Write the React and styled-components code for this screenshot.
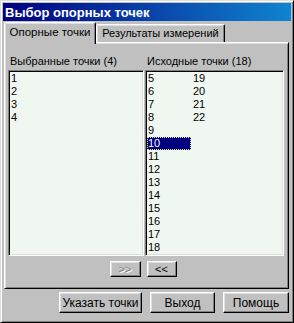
import React from 'react';
import styled, { createGlobalStyle } from 'styled-components';

const GlobalStyle = createGlobalStyle`
  html, body {
    margin: 0;
    padding: 0;
    background: #c0c0c0;
  }
  body {
    font-family: 'Liberation Sans', Arial, sans-serif;
    font-size: 11px;
  }
`;

const Window = styled.div`
  box-sizing: border-box;
  width: 294px;
  height: 323px;
  background: #c0c0c0;
  border: 1px solid;
  border-color: #dfdfdf #000 #000 #dfdfdf;
  box-shadow: inset 1px 1px #fff, inset -1px -1px #808080;
  padding: 2px;
  display: flex;
  flex-direction: column;
`;

const TitleBar = styled.div`
  height: 18px;
  flex: none;
  display: flex;
  align-items: center;
  padding-left: 2px;
  background: linear-gradient(to right, #000080, #1084d0);
  color: #fff;
  font-weight: bold;
  font-size: 13px;
  white-space: nowrap;
`;

const TabStrip = styled.div`
  display: flex;
  align-items: flex-end;
  height: 20px;
  margin-top: 1px;
  padding-left: 1px;
  flex: none;
`;

const Tab = styled.div`
  box-sizing: border-box;
  position: relative;
  display: flex;
  align-items: center;
  justify-content: center;
  width: ${p => p.$w}px;
  height: ${p => (p.$active ? 22 : 18)}px;
  margin-bottom: ${p => (p.$active ? -2 : 0)}px;
  z-index: ${p => (p.$active ? 1 : 0)};
  padding-bottom: ${p => (p.$active ? 3 : 1)}px;
  background: #c0c0c0;
  border: 1px solid;
  border-bottom: none;
  border-color: #fff #000 transparent #fff;
  border-top-left-radius: 2px;
  border-top-right-radius: 2px;
  box-shadow: inset -1px 0 #808080, inset 1px 1px #dfdfdf;
  color: #000;
  font-size: ${p => (p.$active ? 11.5 : 11)}px;
  white-space: nowrap;
`;

const Panel = styled.div`
  box-sizing: border-box;
  height: 247px;
  margin: 0 2px 0 1px;
  flex: none;
  border: 1px solid;
  border-color: #fff #000 #000 #fff;
  box-shadow: inset 1px 1px #dfdfdf, inset -1px -1px #808080;
  padding: 11px 4px 11px 3px;
  display: flex;
  flex-direction: column;
`;

const Columns = styled.div`
  display: grid;
  grid-template-columns: 136px 139px;
  column-gap: 1px;
`;

const Group = styled.div`
  display: flex;
  flex-direction: column;
`;

const Label = styled.div`
  height: 14px;
  line-height: 14px;
  padding-left: 2px;
  margin-bottom: 2px;
  white-space: nowrap;
`;

const ListBox = styled.div`
  box-sizing: border-box;
  height: 186px;
  background: #f0f7f0;
  border: 1px solid;
  border-color: #808080 #fff #fff #808080;
  box-shadow: inset 1px 1px #000, inset -1px -1px #dfdfdf;
  padding: 1px;
  overflow: hidden;
  display: grid;
  grid-auto-flow: column;
  grid-template-rows: repeat(14, 13px);
  grid-auto-columns: ${p => p.$colWidth}px;
  align-content: start;
`;

const Item = styled.div`
  line-height: 13px;
  height: 13px;
  padding-left: 1px;
  color: ${p => (p.$selected ? '#fff' : '#000')};
  background: ${p => (p.$selected ? '#000080' : 'transparent')};
  outline: ${p => (p.$selected ? '1px dotted #e8e890' : 'none')};
  outline-offset: -1px;
  margin-right: ${p => (p.$selected ? 1 : 0)}px;
`;

const MoveRow = styled.div`
  display: flex;
  justify-content: center;
  gap: 6px;
  margin-top: 5px;
  padding-right: 6px;
`;

const Button = styled.button`
  box-sizing: border-box;
  width: ${p => p.$w}px;
  height: ${p => p.$h}px;
  padding: 0;
  margin: 0;
  background: #c0c0c0;
  border: 1px solid;
  border-color: #fff #000 #000 #fff;
  box-shadow: inset -1px -1px #808080, inset 1px 1px #dfdfdf;
  font-family: 'Liberation Sans', Arial, sans-serif;
  font-size: ${p => p.$fs || 11}px;
  color: ${p => (p.disabled ? '#808080' : '#000')};
  text-shadow: ${p => (p.disabled ? '1px 1px #fff' : 'none')};
  display: flex;
  align-items: center;
  justify-content: center;
  white-space: nowrap;
`;

const Footer = styled.div`
  display: flex;
  justify-content: flex-end;
  gap: 8px;
  margin-top: 3px;
  padding-right: 2px;
`;

const selected = ['1', '2', '3', '4'];
const source = Array.from({ length: 18 }, (_, i) => String(i + 5));

export default function App() {
  return (
    <>
      <GlobalStyle />
      <Window>
        <TitleBar>Выбор опорных точек</TitleBar>
        <TabStrip>
          <Tab $active $w={92}>Опорные точки</Tab>
          <Tab $w={129}>Результаты измерений</Tab>
        </TabStrip>
        <Panel>
          <Columns>
            <Group>
              <Label>Выбранные точки (4)</Label>
              <ListBox $colWidth={132}>
                {selected.map(n => (
                  <Item key={n}>{n}</Item>
                ))}
              </ListBox>
            </Group>
            <Group>
              <Label>Исходные точки (18)</Label>
              <ListBox $colWidth={45}>
                {source.map(n => (
                  <Item key={n} $selected={n === '10'}>{n}</Item>
                ))}
              </ListBox>
            </Group>
          </Columns>
          <MoveRow>
            <Button $w={31} $h={16} disabled>&gt;&gt;</Button>
            <Button $w={30} $h={16}>&lt;&lt;</Button>
          </MoveRow>
        </Panel>
        <Footer>
          <Button $w={83} $h={21} $fs={12}>Указать точки</Button>
          <Button $w={65} $h={21} $fs={12}>Выход</Button>
          <Button $w={66} $h={21} $fs={12}>Помощь</Button>
        </Footer>
      </Window>
    </>
  );
}
